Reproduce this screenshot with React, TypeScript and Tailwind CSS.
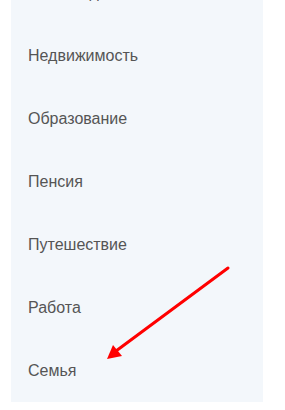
import React from 'react'

const items = ['Личные деньги', 'Недвижимость', 'Образование', 'Пенсия', 'Путешествие', 'Работа', 'Семья']

export default function App() {
  return (
    <div className="relative h-[410px] w-[285px] overflow-hidden bg-white font-['Liberation_Sans',Arial,sans-serif]">
      <div className="-mt-[39px] ml-[11px] w-[252px] bg-[#f3f7fb]">
        {items.map((name) => (
          <div key={name} className="flex h-[63px] items-center pl-[17px] text-[16px] text-[#555]">
            {name}
          </div>
        ))}
      </div>
      <svg className="absolute left-0 top-0" width="285" height="410" viewBox="0 0 285 410">
        <line x1="228" y1="268" x2="116" y2="351" stroke="#ff0000" strokeWidth="3" strokeLinecap="round" />
        <polygon points="107,359 113,345 122,356" fill="#ff0000" />
      </svg>
    </div>
  )
}
